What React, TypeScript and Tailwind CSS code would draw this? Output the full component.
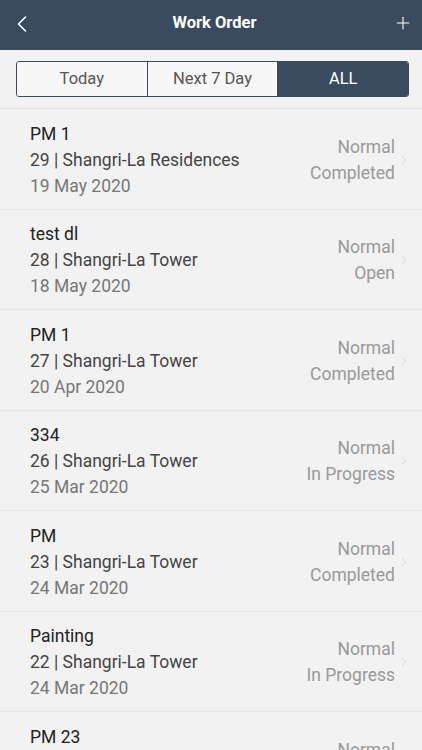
import { ChevronLeft, ChevronRight, Plus } from 'lucide-react';

interface WorkOrder {
  title: string;
  site: string;
  date: string;
  priority: string;
  status: string;
}

const orders: WorkOrder[] = [
  { title: 'PM 1', site: '29 | Shangri-La Residences', date: '19 May 2020', priority: 'Normal', status: 'Completed' },
  { title: 'test dl', site: '28 | Shangri-La Tower', date: '18 May 2020', priority: 'Normal', status: 'Open' },
  { title: 'PM 1', site: '27 | Shangri-La Tower', date: '20 Apr 2020', priority: 'Normal', status: 'Completed' },
  { title: '334', site: '26 | Shangri-La Tower', date: '25 Mar 2020', priority: 'Normal', status: 'In Progress' },
  { title: 'PM', site: '23 | Shangri-La Tower', date: '24 Mar 2020', priority: 'Normal', status: 'Completed' },
  { title: 'Painting', site: '22 | Shangri-La Tower', date: '24 Mar 2020', priority: 'Normal', status: 'In Progress' },
  { title: 'PM 23', site: '21 | Shangri-La Tower', date: '23 Mar 2020', priority: 'Normal', status: 'Completed' },
];

const tabs = ['Today', 'Next 7 Day', 'ALL'];

const App = () => {
  const active = 2;

  return (
    <div className="h-[750px] w-[422px] overflow-hidden bg-[#f2f2f2] font-['Roboto',sans-serif]">
      {/* Header */}
      <div className="flex h-[50px] items-center justify-between bg-[#3a4a5f] pl-[8px] pr-[9px] text-white">
        <ChevronLeft size={28} strokeWidth={1.4} className="mb-[3px]" />
        <h1 className="mb-[3px] text-[16.5px] font-bold">Work Order</h1>
        <Plus size={20} strokeWidth={1.3} className="mb-[5px]" />
      </div>

      {/* Tabs */}
      <div className="flex h-[59px] items-center border-b border-[#e4e4e4] pl-[16px] pr-[13px]">
        <div className="flex h-[36px] w-full overflow-hidden rounded-[3px] border border-[#3a4a5f]">
          {tabs.map((tab, i) => (
            <div
              key={tab}
              className={
                'flex flex-1 items-center justify-center text-[16.5px] ' +
                (i === active ? 'bg-[#3a4a5f] text-white' : 'bg-[#f7f7f7] text-[#555]') +
                (i > 0 ? ' border-l border-[#3a4a5f]' : '')
              }
            >
              {tab}
            </div>
          ))}
        </div>
      </div>

      {/* List */}
      <div>
        {orders.map((o, i) => (
          <div
            key={i}
            className="flex h-[100.5px] items-center border-b border-[#e6e6e6] pl-[30px] pr-[14px] pt-[2px]"
          >
            <div className="flex-1 text-[17.5px] leading-[26px]">
              <p className="text-[#222]">{o.title}</p>
              <p className="text-[#444]">{o.site}</p>
              <p className="text-[#777]">{o.date}</p>
            </div>
            <div className="text-right text-[17.5px] leading-[26px] text-[#999]">
              <p>{o.priority}</p>
              <p>{o.status}</p>
            </div>
            <ChevronRight size={14} strokeWidth={1.2} className="ml-[2px] mr-[-3px] text-[#c8c8c8]" />
          </div>
        ))}
      </div>
    </div>
  );
};

export default App;
